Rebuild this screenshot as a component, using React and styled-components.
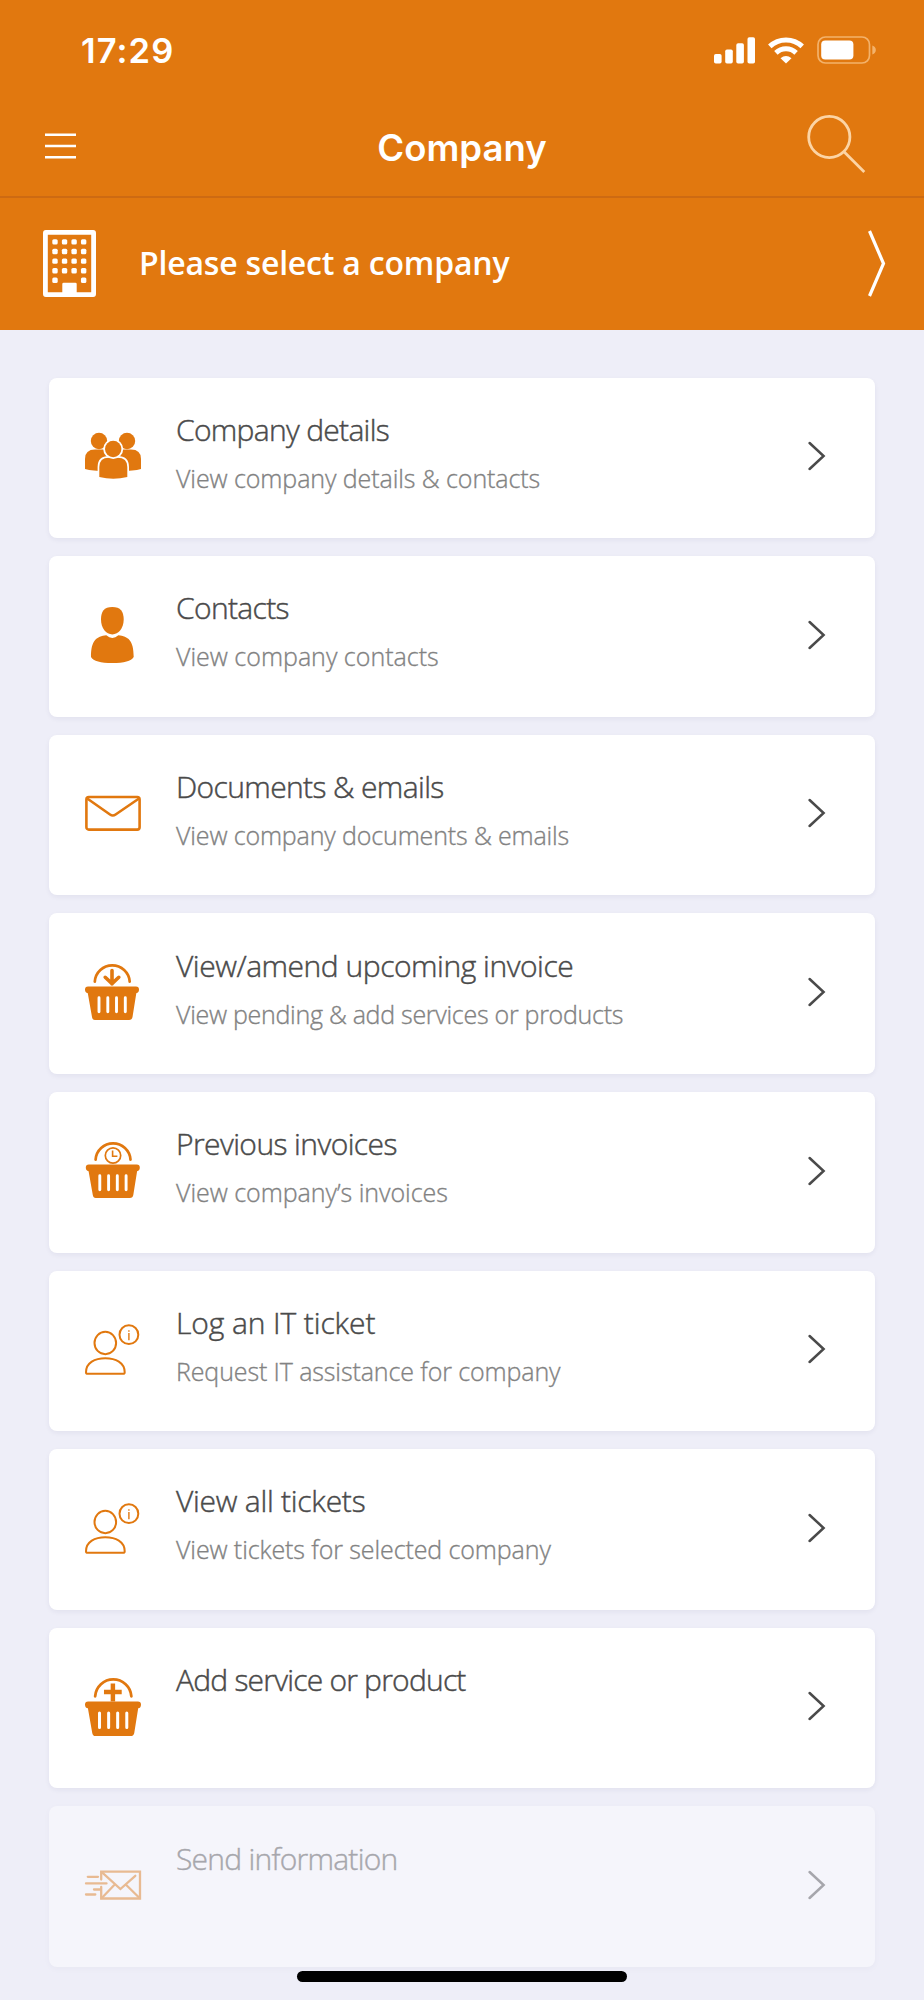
import React from 'react';
import styled, { createGlobalStyle } from 'styled-components';

const ORANGE = '#e1780f';

const GlobalStyle = createGlobalStyle`
  *, *::before, *::after { box-sizing: border-box; }
  html, body { margin: 0; padding: 0; background: #eeeef8; }
`;

const Screen = styled.div`
  width: 924px;
  height: 2000px;
  overflow: hidden;
  display: flex;
  flex-direction: column;
  background: #eeeef8;
  font-family: 'Open Sans', 'Noto Sans', sans-serif;
`;

const Header = styled.header`
  display: flex;
  flex-direction: column;
  background: ${ORANGE};
  color: #fff;
`;

const StatusBar = styled.div`
  height: 100px;
  padding: 0 48px 0 81px;
  display: flex;
  align-items: center;
  justify-content: space-between;
`;

const Clock = styled.span`
  font: 600 34.5px/40px Inter, sans-serif;
  letter-spacing: 1.1px;
  margin-top: 2px;
`;

const StatusIcons = styled.div`
  display: flex;
  align-items: center;
  gap: 13px;
  svg { display: block; }
`;

const NavBar = styled.div`
  height: 98px;
  padding: 0 58px 2px 45px;
  display: grid;
  grid-template-columns: 60px 1fr 60px;
  align-items: center;
  border-bottom: 2px solid #cd6a12;
  svg { display: block; margin-top: -2px; }
  svg:last-child { justify-self: end; margin-top: -8px; }
`;

const NavTitle = styled.h1`
  margin: 1px 0 0 13px;
  text-align: center;
  font: 600 36.5px/44px Inter, sans-serif;
`;

const CompanyPicker = styled.button`
  height: 132px;
  padding: 0 38px 2px 43px;
  border: 0;
  display: flex;
  align-items: center;
  background: none;
  color: inherit;
  font: 600 32px/44px 'Open Sans', sans-serif;
  letter-spacing: -0.2px;
  text-align: left;
  svg { display: block; }
`;

const PickerLabel = styled.span`
  flex: 1;
  padding: 0 0 1px 43px;
`;

const Menu = styled.main`
  padding: 47.7px 49px 0;
  display: flex;
  flex-direction: column;
  gap: 18px;
`;

const Card = styled.button`
  height: 160.6px;
  padding: 0 47px 0 36px;
  border: 0;
  border-radius: 8px;
  display: grid;
  grid-template-columns: 91px 1fr 24px;
  align-items: start;
  background: #fff;
  box-shadow: 0 2px 5px rgba(40, 40, 90, 0.06);
  opacity: ${(p) => (p.$dimmed ? 0.43 : 1)};
  font-family: inherit;
  text-align: left;
`;

const CardIcon = styled.svg`
  display: block;
  margin-top: 50.3px;
  overflow: visible;
  color: ${ORANGE};
`;

const CardText = styled.div`
  padding-top: 32.2px;
  display: flex;
  flex-direction: column;
  gap: 11px;
  white-space: nowrap;
`;

const Title = styled.span`
  font-size: 30px;
  line-height: 40px;
  font-weight: 300;
  color: #4a4a4a;
  -webkit-text-stroke: 0.45px #4a4a4a;
  letter-spacing: ${(p) => p.$tracking}px;
`;

const Subtitle = styled.span`
  font-size: 25px;
  line-height: 34px;
  font-weight: 300;
  color: #828282;
  -webkit-text-stroke: 0.35px #828282;
  letter-spacing: ${(p) => p.$tracking}px;
`;

const Arrow = styled.svg`
  display: block;
  margin-top: 63.5px;
  justify-self: end;
`;

const HomeIndicator = styled.div`
  width: 330px;
  height: 11.5px;
  margin: 3.8px auto 0;
  border-radius: 6px;
  background: #000;
`;

const PeopleIcon = () => (
  <g fill="currentColor">
    <circle cx="14" cy="13" r="8.2" />
    <circle cx="42" cy="13" r="8.2" />
    <path d="M0 41V31Q0 21.5 10 21.5H18Q26 21.5 26 31V43Q9 43.5 0 41Z" />
    <path d="M56 41V31Q56 21.5 46 21.5H38Q30 21.5 30 31V43Q47 43.5 56 41Z" />
    <path d="M14.3 49V39Q14.3 29.7 24 29.7H32.6Q42.3 29.7 42.3 39V49Q28.3 52.4 14.3 49Z" stroke="#fff" strokeWidth="3.4" paintOrder="stroke" />
    <circle cx="28.2" cy="21" r="8.2" stroke="#fff" strokeWidth="3.6" paintOrder="stroke" />
  </g>
);

const PersonIcon = () => (
  <g fill="currentColor">
    <path d="M27.3 0C35.5 0 38.7 4.6 38.7 12.5C38.7 21 33.5 27.4 27.3 27.4S16 21 16 12.5C16 4.6 19 0 27.3 0Z" />
    <path d="M21.3 28.3Q27.3 33.6 33.4 28.3C43 29.5 48.7 33 48.7 50Q45 56 27.3 56T6 50C6 33 11.7 29.5 21.3 28.3Z" />
  </g>
);

const EnvelopeIcon = () => (
  <g fill="none" stroke="currentColor" strokeWidth="2.6" strokeLinejoin="round">
    <rect x="1.4" y="12" width="53.2" height="32.6" rx="2.4" />
    <path d="M2.2 13.5L25 29.5Q27.8 31.4 30.6 29.5L54 13.5" />
  </g>
);

const Basket = ({ children }) => (
  <g>
    <path d="M9.8 17.6A17.5 17.5 0 0 1 44.7 17.6" fill="none" stroke="currentColor" strokeWidth="2.7" strokeLinecap="round" />
    <path d="M3 22.6H51Q54 22.6 54 25.6Q54 29 51.3 29.2L47.5 53Q47 56 44 56H10Q7.4 56 7 53L2.8 29.2Q0 29 0 25.6Q0 22.6 3 22.6Z" fill="currentColor" />
    <path d="M14 33.7V47.7M22.8 33.7V47.7M31.5 33.7V47.7M40.3 33.7V47.7" fill="none" stroke="#fff" strokeWidth="2.9" strokeLinecap="round" />
    {children}
  </g>
);

const BasketDownIcon = () => (
  <Basket>
    <path d="M27 6.5V20M20.2 13.3L27 19.6L33.8 13.3" fill="none" stroke="currentColor" strokeWidth="3.6" strokeLinecap="round" strokeLinejoin="round" />
  </Basket>
);

const BasketClockIcon = () => (
  <g transform="translate(0.8 0)">
    <Basket>
      <circle cx="27.2" cy="13.5" r="7.7" fill="none" stroke="currentColor" strokeWidth="1.7" />
      <path d="M26.8 8.5V14.2H31.6" fill="none" stroke="currentColor" strokeWidth="1.6" />
    </Basket>
  </g>
);

const BasketPlusIcon = () => (
  <g transform="scale(1.037)">
    <Basket>
      <path d="M26.9 5.3V22.6M18.3 13.6H35.4" fill="none" stroke="currentColor" strokeWidth="4.3" />
    </Basket>
  </g>
);

const TicketIcon = () => (
  <g fill="none" stroke="currentColor" strokeWidth="2" strokeLinejoin="round">
    <ellipse cx="20.3" cy="22" rx="10.8" ry="11.2" />
    <path d="M1 51.2C1 41.5 10 37.2 20.3 37.2S39.7 41.5 39.7 51.2Q39.7 52.8 38 52.8H2.7Q1 52.8 1 51.2Z" />
    <circle cx="43.9" cy="13.7" r="9.4" />
    <path d="M43.9 12V19.3M43.9 9.2V10.8" strokeWidth="1.4" />
  </g>
);

const SendIcon = () => (
  <g fill="none" stroke="currentColor" strokeWidth="2.3" strokeLinecap="round">
    <path d="M16.2 22.5V14.6H55V41.5H16.2V30" />
    <path d="M16.8 15.2L35.4 32L50.3 18.8M16.8 41L29 28.3M54.5 41L41.5 28.3" />
    <path d="M2.8 19.8H13M1 26.4H21.5M9 32.5H15.5M1 37.5H10.3" />
  </g>
);

const ITEMS = [
  { icon: PeopleIcon, title: 'Company details', titleTracking: -0.7, subtitle: 'View company details & contacts', subTracking: -0.08 },
  { icon: PersonIcon, title: 'Contacts', titleTracking: -0.65, subtitle: 'View company contacts', subTracking: 0 },
  { icon: EnvelopeIcon, title: 'Documents & emails', titleTracking: -0.62, subtitle: 'View company documents & emails', subTracking: -0.14 },
  { icon: BasketDownIcon, title: 'View/amend upcoming invoice', titleTracking: -0.47, subtitle: 'View pending & add services or products', subTracking: -0.28 },
  { icon: BasketClockIcon, title: 'Previous invoices', titleTracking: -0.58, subtitle: 'View company’s invoices', subTracking: -0.03 },
  { icon: TicketIcon, title: 'Log an IT ticket', titleTracking: -0.1, subtitle: 'Request IT assistance for company', subTracking: -0.11 },
  { icon: TicketIcon, title: 'View all tickets', titleTracking: -0.25, subtitle: 'View tickets for selected company', subTracking: -0.1 },
  { icon: BasketPlusIcon, title: 'Add service or product', titleTracking: -0.78 },
  { icon: SendIcon, title: 'Send information', titleTracking: -0.75, dimmed: true },
];

const WINDOWS = [0, 1, 2, 3, 4].flatMap((row) =>
  [0, 1, 2, 3].filter((col) => row < 4 || col === 0 || col === 3).map((col) => [col, row])
);

export default function App() {
  return (
    <>
      <GlobalStyle />
      <Screen>
        <Header>
          <StatusBar>
            <Clock>17:29</Clock>
            <StatusIcons>
              <svg width="41" height="27" viewBox="0 0 41 27" fill="#fff">
                <rect x="0" y="17" width="7.6" height="9.5" rx="1.8" />
                <rect x="11.2" y="12.4" width="7.6" height="14.1" rx="1.8" />
                <rect x="22.3" y="6.3" width="7.6" height="20.2" rx="1.8" />
                <rect x="33.5" y="0.3" width="7.5" height="26.2" rx="1.8" />
              </svg>
              <svg width="36" height="27" viewBox="0 0 36 27" fill="none" stroke="#fff" strokeWidth="5">
                <path d="M1.8 9.4A23.5 23.5 0 0 1 34.2 9.4" />
                <path d="M7.9 15.9A14.6 14.6 0 0 1 28.1 15.9" />
                <path d="M12.5 21.2Q18 16.9 23.5 21.2L18 26.5Z" fill="#fff" stroke="none" />
              </svg>
              <svg width="59" height="28" viewBox="0 0 59 28">
                <rect x="1" y="1" width="51.5" height="26" rx="7.5" fill="none" stroke="#f3b26b" strokeWidth="1.7" />
                <rect x="4.2" y="4.4" width="32.2" height="19.2" rx="4" fill="#fff" />
                <path d="M55.3 9.5C60 11 60 17 55.3 18.5Z" fill="#f3b26b" />
              </svg>
            </StatusIcons>
          </StatusBar>
          <NavBar>
            <svg width="31" height="26" viewBox="0 0 31 26" stroke="#fff" strokeWidth="2.4">
              <path d="M0 1.8H31M0 13H31M0 24.2H31" />
            </svg>
            <NavTitle>Company</NavTitle>
            <svg width="60" height="60" viewBox="0 0 60 60" fill="none" stroke="#fcd4a4" strokeWidth="2.8">
              <circle cx="23.3" cy="24" r="20.6" />
              <path d="M38 38.7L58.3 58.9" />
            </svg>
          </NavBar>
          <CompanyPicker>
            <svg width="53" height="67" viewBox="0 0 53 67" fill="#fff">
              <rect x="2.4" y="2.4" width="48.2" height="62.2" rx="0.5" fill="none" stroke="#fff" strokeWidth="4.8" strokeLinejoin="round" />
              {WINDOWS.map(([col, row]) => (
                <rect key={`${col}-${row}`} x={9.3 + col * 9.55} y={9.2 + row * 9.6} width="5.4" height="5.4" rx="1.5" />
              ))}
              <path d="M19.3 65V54Q19.3 52.7 20.6 52.7H32.4Q33.7 52.7 33.7 54V65Z" />
            </svg>
            <PickerLabel>Please select a company</PickerLabel>
            <svg width="18" height="67" viewBox="0 0 18 67" fill="none" stroke="#fff" strokeWidth="3.2">
              <path d="M1.5 1L15.5 33.5L1.5 66" />
            </svg>
          </CompanyPicker>
        </Header>
        <Menu>
          {ITEMS.map(({ icon: Icon, title, titleTracking, subtitle, subTracking, dimmed }) => (
            <Card key={title} $dimmed={dimmed}>
              <CardIcon width="56" height="58" viewBox="0 0 56 58">
                <Icon />
              </CardIcon>
              <CardText>
                <Title $tracking={titleTracking}>{title}</Title>
                {subtitle && <Subtitle $tracking={subTracking}>{subtitle}</Subtitle>}
              </CardText>
              <Arrow width="20" height="30" viewBox="0 0 20 30" fill="none" stroke="#4a4a4a" strokeWidth="2.5">
                <path d="M1.6 2L15.6 15L1.6 28" strokeLinecap="round" />
              </Arrow>
            </Card>
          ))}
        </Menu>
        <HomeIndicator />
      </Screen>
    </>
  );
}
